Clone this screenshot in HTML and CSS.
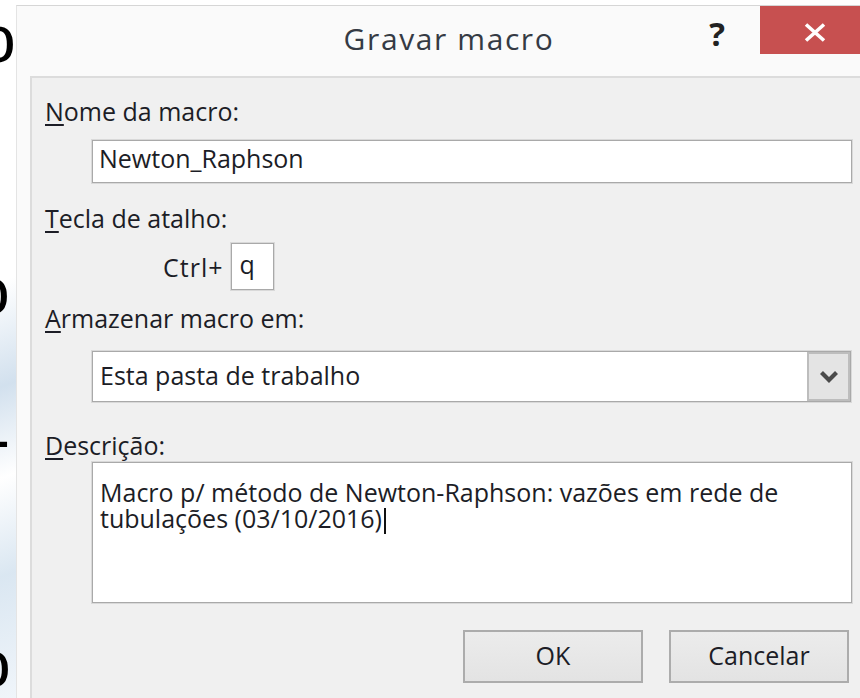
FILE: index.html
```html
<!DOCTYPE html>
<html lang="pt-BR">
<head>
<meta charset="utf-8">
<title>Gravar macro</title>
<link rel="stylesheet" href="styles.css">
</head>
<body>
<div class="screen">
  <div class="behind">
    <span class="glyph g1">o</span>
    <span class="glyph g2">o</span>
    <span class="glyph g3">-</span>
    <span class="glyph g4">o</span>
  </div>

  <div class="window">
    <div class="titlebar">
      <div class="title">Gravar macro</div>
      <div class="help">?</div>
      <div class="close">
        <svg width="22" height="19" viewBox="0 0 22 19" aria-hidden="true">
          <path d="M2 1.5 L20 17.5 M20 1.5 L2 17.5" stroke="#ffffff" stroke-width="3.6" fill="none"/>
        </svg>
      </div>
    </div>

    <div class="frame">
      <div class="panel">
        <div class="lbl"><u>N</u>ome da macro:</div>
        <div class="field name">Newton_Raphson</div>

        <div class="lbl lbl-key"><u>T</u>ecla de atalho:</div>
        <div class="shortcut">
          <span class="ctrl">Ctrl+</span>
          <div class="field key">q</div>
        </div>

        <div class="lbl lbl-store"><u>A</u>rmazenar macro em:</div>
        <div class="select">
          <span class="select-text">Esta pasta de trabalho</span>
          <div class="drop">
            <svg width="20" height="13" viewBox="0 0 20 13" aria-hidden="true">
              <path d="M2.5 2.5 L10 10 L17.5 2.5" stroke="#4a4a4a" stroke-width="4.2" fill="none"/>
            </svg>
          </div>
        </div>

        <div class="lbl lbl-desc"><u>D</u>escrição:</div>
        <div class="field desc">Macro p/ método de Newton-Raphson: vazões em rede de tubulações (03/10/2016)<span class="caret"></span></div>

        <div class="actions">
          <div class="btn">OK</div>
          <div class="btn">Cancelar</div>
        </div>
      </div>
    </div>
  </div>
</div>
</body>
</html>
```

FILE: styles.css
```css
html, body {
  margin: 0;
  padding: 0;
}

body {
  width: 860px;
  height: 698px;
  overflow: hidden;
  background: #ffffff;
  font-family: "Open Sans", "Noto Sans", sans-serif;
  color: #1c1d26;
}

.screen {
  display: flex;
  height: 698px;
}

/* strip of the document lying behind the dialog */
.behind {
  flex: none;
  width: 16px;
  overflow: hidden;
  display: flex;
  flex-direction: column;
  background:
    linear-gradient(160deg, rgba(255,255,255,0) 40%, rgba(205,221,236,0.9) 55%, rgba(255,255,255,0.6) 68%, rgba(214,228,240,0.9) 82%, rgba(240,245,250,1) 100%),
    #ffffff;
  font-family: "Liberation Sans", sans-serif;
  font-size: 66px;
  line-height: 66px;
  color: #000;
}

.glyph {
  display: block;
  height: 66px;
  white-space: nowrap;
}

.g1 { margin-top: 6px;   margin-left: -21px; }
.g2 { margin-top: 186px; margin-left: -27px; }
.g3 { margin-top: 82px;  margin-left: -12px; }
.g4 { margin-top: 159px; margin-left: -26px; }

/* dialog window */
.window {
  flex: 1;
  margin-top: 5px;
  border-top: 1px solid #d6d6d6;
  border-left: 1px solid #e4e4e4;
  background: #fafafa;
  display: flex;
  flex-direction: column;
}

.titlebar {
  flex: none;
  height: 70px;
  display: flex;
  align-items: flex-start;
}

.title {
  flex: 1;
  padding-left: 184px;
  padding-top: 13px;
  text-align: center;
  font-size: 30px;
  line-height: 40px;
  letter-spacing: 1.6px;
  color: #353a44;
}

.help {
  flex: none;
  width: 40px;
  margin-right: 23px;
  padding-top: 6px;
  text-align: center;
  font-size: 33px;
  line-height: 44px;
  font-weight: 700;
  color: #222;
}

.close {
  flex: none;
  width: 100px;
  height: 48px;
  background: #c75050;
  display: flex;
  align-items: center;
  justify-content: center;
}

.close svg {
  margin-left: 10px;
  margin-top: 4px;
}

.frame {
  flex: 1;
  padding-left: 13px;
  display: flex;
}

.panel {
  flex: 1;
  border-top: 2px solid #dcdcdc;
  border-left: 2px solid #dcdcdc;
  background: #f0f0f0;
  padding: 18px 8px 0 13px;
  display: flex;
  flex-direction: column;
  font-size: 25px;
  font-weight: 500;
}

.lbl {
  height: 30px;
  line-height: 30px;
  white-space: nowrap;
}

.lbl u {
  text-decoration-thickness: 2px;
  text-underline-offset: 3px;
}

.lbl-key   { margin-top: 20px; }
.lbl-store { margin-top: 13px; }
.lbl-desc  { margin-top: 28px; }

.field {
  box-sizing: border-box;
  background: #ffffff;
  border: 1px solid #a9a9a9;
  box-shadow: 0 0 0 1px #d9d9d9;
  white-space: nowrap;
}

.name {
  margin: 14px 0 0 47px;
  height: 43px;
  line-height: 34px;
  padding-left: 6px;
}

.shortcut {
  margin-top: 10px;
  padding-left: 118px;
  height: 47px;
  display: flex;
  align-items: center;
  gap: 8px;
}

.ctrl {
  line-height: 30px;
  letter-spacing: 1px;
}

.key {
  width: 43px;
  height: 47px;
  line-height: 40px;
  padding-left: 7px;
}

.select {
  box-sizing: border-box;
  margin: 18px 1px 0 47px;
  height: 51px;
  background: #ffffff;
  border: 1px solid #a9a9a9;
  box-shadow: 0 0 0 1px #d9d9d9;
  display: flex;
}

.select-text {
  flex: 1;
  padding-left: 7px;
  line-height: 46px;
  white-space: nowrap;
}

.drop {
  box-sizing: border-box;
  flex: none;
  width: 43px;
  background: #e4e4e4;
  border: 2px solid #bdbdbd;
  display: flex;
  align-items: center;
  justify-content: center;
}

.desc {
  margin: 2px 0 0 47px;
  height: 141px;
  padding: 16px 8px 0 7px;
  line-height: 26px;
  white-space: normal;
}

.caret {
  display: inline-block;
  width: 2px;
  height: 26px;
  margin-left: 2px;
  vertical-align: -6px;
  background: #111;
}

.actions {
  margin-top: 27px;
  padding-right: 3px;
  display: flex;
  justify-content: flex-end;
  gap: 26px;
}

.btn {
  box-sizing: border-box;
  width: 180px;
  height: 53px;
  border: 2px solid #acacac;
  background: linear-gradient(#ececec, #e3e3e3);
  text-align: center;
  line-height: 47px;
}
```
